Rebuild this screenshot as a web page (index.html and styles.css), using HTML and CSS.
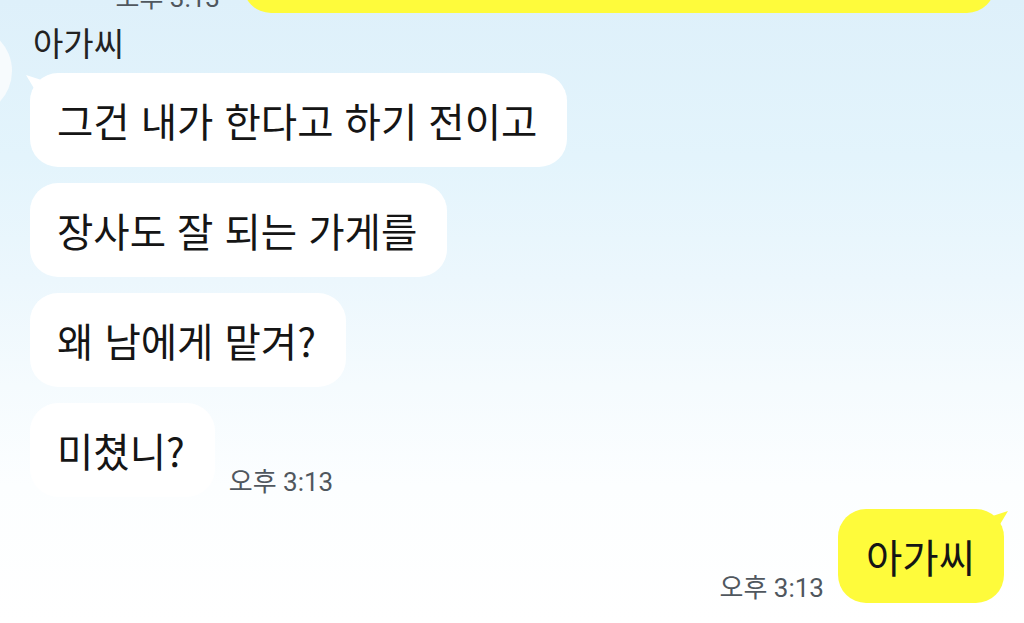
FILE: index.html
```html
<!DOCTYPE html>
<html lang="ko">
<head>
    <meta charset="UTF-8">
    <meta name="viewport" content="width=device-width, initial-scale=1.0">
    <title>채팅</title>
    <link rel="stylesheet" href="styles.css">
</head>
<body>
    <div class="chat">
        <div class="row mine cut">
            <span class="time">오후 3:13</span>
            <div class="bubble yellow wide">&nbsp;</div>
        </div>

        <div class="group">
            <div class="avatar"></div>
            <div class="messages">
                <div class="name">아가씨</div>
                <div class="row"><div class="bubble first">그건 내가 한다고 하기 전이고</div></div>
                <div class="row"><div class="bubble">장사도 잘 되는 가게를</div></div>
                <div class="row"><div class="bubble">왜 남에게 맡겨?</div></div>
                <div class="row">
                    <div class="bubble">미쳤니?</div>
                    <span class="time">오후 3:13</span>
                </div>
            </div>
        </div>

        <div class="row mine last">
            <span class="time">오후 3:13</span>
            <div class="bubble yellow first">아가씨</div>
        </div>
    </div>
</body>
</html>
```

FILE: styles.css
```css
body {
    margin: 0;
    width: 1024px;
    height: 623px;
    overflow: hidden;
    font-family: "Noto Sans CJK KR", "Noto Sans", sans-serif;
    color: #151515;
    background: linear-gradient(180deg, #def0fa 0%, #e3f4fc 25%, #ecf7fd 45%, #f5fbfe 62%, #fcfeff 78%, #ffffff 100%);
}
.chat {
    display: flex;
    flex-direction: column;
}
.row {
    display: flex;
    align-items: flex-end;
    gap: 14px;
}
.row.mine {
    justify-content: flex-end;
}
.row.cut {
    margin-top: -81px;
    margin-right: 29px;
    gap: 23px;
}
.row.last {
    margin-top: 12px;
    margin-right: 20px;
}
.time {
    font-family: Roboto, "Noto Sans CJK KR", sans-serif;
    font-size: 26px;
    line-height: 30px;
    color: #50575e;
    white-space: nowrap;
}
.bubble {
    position: relative;
    background: #ffffff;
    border-radius: 28px;
    font-size: 39.5px;
    line-height: 44px;
    padding: 25px 30px 25px 27px;
    white-space: nowrap;
}
.bubble.wide {
    width: 695px;
}
.bubble.yellow {
    background: #fefb3b;
    padding: 25px 29px 25px 28px;
}
.bubble.first::before {
    content: "";
    position: absolute;
    top: 2px;
    left: -4px;
    width: 24px;
    height: 22px;
    background: inherit;
    clip-path: polygon(0 0, 100% 35%, 55% 100%);
}
.bubble.yellow.first::before {
    left: auto;
    right: -4px;
    clip-path: polygon(100% 0, 0 35%, 45% 100%);
}
.group {
    display: flex;
    align-items: flex-start;
    margin-top: 10px;
}
.avatar {
    width: 90px;
    height: 90px;
    margin-left: -78px;
    margin-top: 3px;
    margin-right: 18px;
    border-radius: 50%;
    background: #f7fbfd;
    flex-shrink: 0;
}
.messages {
    display: flex;
    flex-direction: column;
    gap: 16px;
}
.name {
    font-size: 33px;
    line-height: 38px;
    margin-left: 3px;
    margin-bottom: -4px;
    color: #222;
}
```
